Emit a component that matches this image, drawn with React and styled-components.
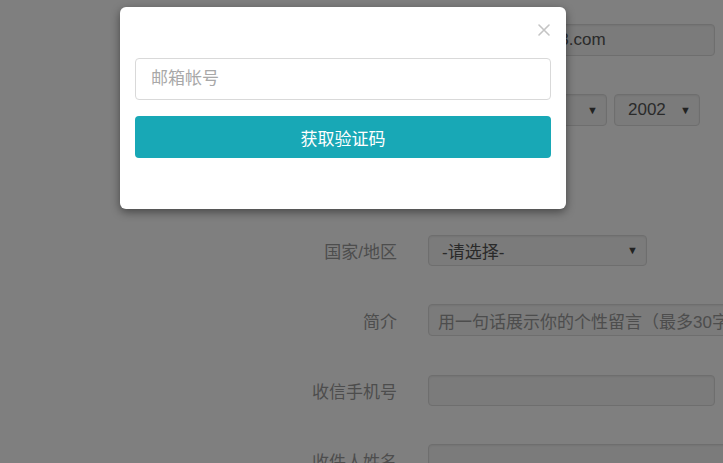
import styled, { createGlobalStyle } from "styled-components";

const GlobalStyle = createGlobalStyle`
  html, body {
    margin: 0;
    padding: 0;
    width: 100%;
    height: 100%;
    overflow: hidden;
    background: #ffffff;
    font-family: "Liberation Sans", "Noto Sans CJK SC", sans-serif;
  }
  #root {
    height: 100%;
  }
`;

const Page = styled.div`
  position: relative;
  width: 100%;
  height: 100%;
  overflow: hidden;
  background: #ffffff;
`;

const Form = styled.div`
  display: grid;
  grid-template-columns: 397px 1fr;
  grid-auto-rows: 32px;
  column-gap: 31px;
  row-gap: 38px;
  padding-top: 24px;
`;

const Label = styled.div`
  display: flex;
  align-items: center;
  justify-content: flex-end;
  font-size: 17px;
  color: #9a9a9a;
  white-space: nowrap;
`;

const Field = styled.div`
  display: flex;
  align-items: center;
  gap: 7px;
  min-width: 0;
`;

const TextBox = styled.div`
  box-sizing: border-box;
  width: ${(p) => p.$width}px;
  flex: none;
  height: ${(p) => p.$height || 32}px;
  display: flex;
  align-items: center;
  padding: 0 9px;
  border: 1px solid #dcdcdc;
  border-radius: 4px;
  background: #f6f6f6;
  box-shadow: inset 0 1px 2px rgba(0, 0, 0, 0.06);
  font-size: 17px;
  color: ${(p) => (p.$muted ? "#9a9a9a" : "#555555")};
  white-space: nowrap;
  overflow: hidden;
`;

const Select = styled(TextBox)`
  justify-content: space-between;
  padding: 0 8px 0 13px;
`;

const Caret = styled.span`
  font-size: 11px;
  color: #444;
`;

const Radio = styled.span`
  display: inline-flex;
  align-items: center;
  gap: 6px;
  font-size: 17px;
  color: #555;
  margin-right: 18px;
`;

const Overlay = styled.div`
  position: absolute;
  inset: 0;
  background: rgba(0, 0, 0, 0.5);
`;

const Modal = styled.div`
  position: absolute;
  left: 120px;
  top: 7px;
  width: 446px;
  box-sizing: border-box;
  padding: 0 15px 51px;
  background: #ffffff;
  border-radius: 6px;
  box-shadow: 0 3px 10px rgba(0, 0, 0, 0.45);
  display: flex;
  flex-direction: column;
`;

const CloseRow = styled.div`
  height: 51px;
  display: flex;
  justify-content: flex-end;
  align-items: flex-start;
  padding-top: 17px;
  padding-right: 1px;
  box-sizing: border-box;
`;

const CloseButton = styled.button`
  border: none;
  background: none;
  padding: 0;
  width: 12px;
  height: 12px;
  cursor: pointer;
  display: flex;
`;

const ModalBody = styled.div`
  display: flex;
  flex-direction: column;
  gap: 16px;
`;

const EmailInput = styled.input`
  box-sizing: border-box;
  width: 100%;
  height: 42px;
  padding: 0 15px;
  border: 1px solid #d9d9d9;
  border-radius: 4px;
  font-size: 17px;
  font-family: "Liberation Sans", "Noto Sans CJK SC", sans-serif;
  color: #555;
  outline: none;

  &::placeholder {
    color: #a8a8a8;
  }
`;

const SendButton = styled.button`
  width: 100%;
  height: 42px;
  border: none;
  border-radius: 4px;
  background: #18a8b6;
  color: #ffffff;
  font-size: 17px;
  font-family: "Liberation Sans", "Noto Sans CJK SC", sans-serif;
  cursor: pointer;
`;

export default function App() {
  return (
    <>
      <GlobalStyle />
      <Page>
        <Form>
          <Label>邮箱</Label>
          <Field>
            <TextBox $width={287}>987654321@163.com</TextBox>
          </Field>

          <Label>生日</Label>
          <Field>
            <Select $width={86}>
              8 <Caret>▼</Caret>
            </Select>
            <Select $width={86}>
              16 <Caret>▼</Caret>
            </Select>
            <Select $width={86}>
              2002 <Caret>▼</Caret>
            </Select>
          </Field>

          <Label>性别</Label>
          <Field>
            <Radio>○ 男</Radio>
            <Radio>○ 女</Radio>
          </Field>

          <Label>国家/地区</Label>
          <Field>
            <Select $width={219} $height={31}>
              -请选择- <Caret>▼</Caret>
            </Select>
          </Field>

          <Label>简介</Label>
          <Field>
            <TextBox $width={360} $muted>
              用一句话展示你的个性留言（最多30字）
            </TextBox>
          </Field>

          <Label>收信手机号</Label>
          <Field>
            <TextBox $width={287} $height={31} />
          </Field>

          <Label>收件人姓名</Label>
          <Field>
            <TextBox $width={360} />
          </Field>
        </Form>

        <Overlay />

        <Modal>
          <CloseRow>
            <CloseButton aria-label="关闭">
              <svg width="12" height="12" viewBox="0 0 12 12">
                <path
                  d="M1 1 L11 11 M11 1 L1 11"
                  stroke="#c4c4c4"
                  strokeWidth="1.6"
                  strokeLinecap="round"
                />
              </svg>
            </CloseButton>
          </CloseRow>
          <ModalBody>
            <EmailInput placeholder="邮箱帐号" />
            <SendButton>获取验证码</SendButton>
          </ModalBody>
        </Modal>
      </Page>
    </>
  );
}
